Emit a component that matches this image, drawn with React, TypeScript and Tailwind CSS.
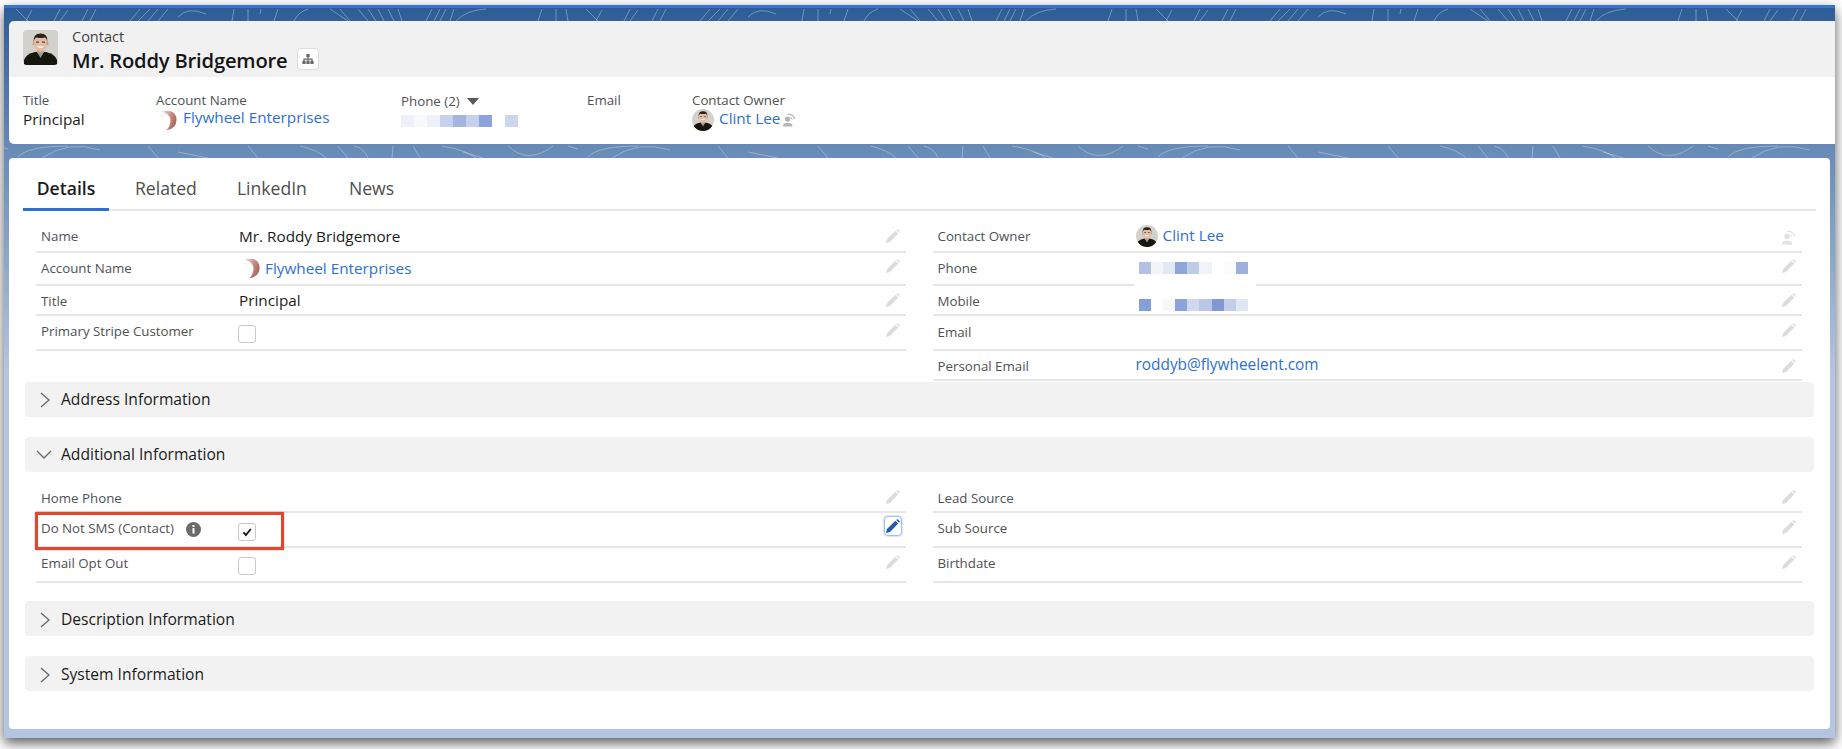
import React from "react";

const FONT = "font-['Open_Sans','Noto_Sans',sans-serif]";

const topStrokes = [
  "M8 9 L20 21", "M24 10 L18 21", "M52 9 L46 21", "M60 10 L52 21", "M80 9 L74 21", "M88 9 L82 21",
  "M132 9 L122 21", "M142 9 L130 21", "M150 9 L140 21", "M160 9 L150 21", "M170 17 Q180 6 198 14",
  "M226 9 L224 21", "M240 9 L240 21", "M253 9 L252 14", "M270 9 L266 21", "M300 9 Q290 12 286 21",
  "M322 9 L340 21", "M332 9 L342 21", "M350 9 L360 21", "M360 9 L368 21", "M370 9 L376 21", "M380 9 L386 21", "M390 9 L394 21",
  "M424 9 L418 21", "M432 9 L426 21", "M438 9 L432 21", "M446 9 L442 21", "M478 9 Q458 10 448 21",
  "M534 9 L530 21", "M548 9 L548 21", "M558 9 L560 21",
];
const bottomStrokes = [
  "M10 157 Q20 146 60 146", "M34 158 Q60 140 92 150", "M140 146 L150 158", "M170 152 L200 158", "M240 146 L250 158",
  "M292 146 Q310 150 318 158", "M330 146 L340 158", "M346 146 Q356 148 360 158", "M385 146 L384 158", "M405 146 L412 158",
  "M434 146 Q460 150 470 160", "M455 152 L475 158", "M500 146 Q520 165 545 146", "M560 146 Q590 158 610 146",
];

function Pattern() {
  return (
    <svg className="absolute left-0 top-0 w-full h-[170px] pointer-events-none" aria-hidden="true">
      <defs>
        <pattern id="swirl" x="4" y="-8" width="570" height="170" patternUnits="userSpaceOnUse">
          {topStrokes.map((d) => (
            <path key={d} d={d} fill="none" stroke="#ffffff" strokeOpacity="0.32" strokeWidth="1" />
          ))}
          {bottomStrokes.map((d) => (
            <path key={d} d={d} fill="none" stroke="#ffffff" strokeOpacity="0.3" strokeWidth="1" />
          ))}
        </pattern>
      </defs>
      <rect x="0" y="0" width="100%" height="170" fill="url(#swirl)" />
    </svg>
  );
}

function Face({ className }: { className: string }) {
  return (
    <svg viewBox="0 0 35 35" className={className} aria-hidden="true">
      <defs>
        <filter id="soft">
          <feGaussianBlur stdDeviation="0.45" />
        </filter>
      </defs>
      <rect width="35" height="35" fill="#d2d1cb" />
      <g filter="url(#soft)">
        <path d="M1 35 L1 30 Q3 24 12 22 L23 22 Q32 24 34 30 L34 35 Z" fill="#14120f" />
        <path d="M13.5 21 L17.5 28 L21.5 21 Z" fill="#9a9da0" />
        <rect x="14.2" y="18" width="6.6" height="5" fill="#c99f88" />
        <ellipse cx="17.5" cy="13" rx="6.8" ry="8.4" fill="#e3bda6" />
        <ellipse cx="10.6" cy="13.4" rx="1" ry="1.8" fill="#c99f88" />
        <ellipse cx="24.4" cy="13.4" rx="1" ry="1.8" fill="#c99f88" />
        <path d="M10.6 12 Q9.8 3.4 17.6 3.4 Q25.2 3.4 24.4 12 Q23.8 8.2 22 7.4 Q17 8.4 13 7.6 Q11.2 8.8 10.6 12 Z" fill="#2b231d" />
        <rect x="13" y="11.6" width="3" height="1" fill="#3a2c24" />
        <rect x="19" y="11.6" width="3" height="1" fill="#3a2c24" />
        <path d="M13.6 16 Q17.5 20 21.4 16 Q17.5 17.2 13.6 16 Z" fill="#ffffff" />
      </g>
    </svg>
  );
}

function Pencil({ blue = false }: { blue?: boolean }) {
  return (
    <svg viewBox="0 0 15 15" className="w-[15px] h-[15px]" aria-hidden="true">
      <path
        d="M1 14 L2 10 L10.4 1.8 L13.2 4.6 L5 13 Z M11.2 1 L12 .4 Q12.6 0 13.2 .5 L14.6 1.9 Q15 2.5 14.6 3 L14 3.8 Z"
        fill={blue ? "#1f5bb5" : "#dcdcdc"}
      />
    </svg>
  );
}

function Transfer({ className }: { className: string }) {
  return (
    <svg viewBox="0 0 15 15" className={className} aria-hidden="true">
      <circle cx="6" cy="6.5" r="2.8" fill="currentColor" />
      <path d="M1 14.5 L1 12.6 Q2.4 10.4 6 10.4 Q9.6 10.4 11 12.6 L11 14.5 Z" fill="currentColor" />
      <path d="M6 1.5 Q12 .6 13.6 6.4" fill="none" stroke="currentColor" strokeWidth="1.3" />
      <path d="M9 4.4 Q10.6 5.4 10.8 7" fill="none" stroke="currentColor" strokeWidth="1.1" />
    </svg>
  );
}

function FlywheelLogo() {
  return (
    <svg viewBox="0 0 19 22" className="w-[19px] h-[22px] shrink-0" aria-hidden="true">
      <defs>
        <linearGradient id="fly" x1="0" y1="0" x2="1" y2="0.5">
          <stop offset="0" stopColor="#f3e4e1" />
          <stop offset="0.6" stopColor="#c98f88" />
          <stop offset="1" stopColor="#a9655d" />
        </linearGradient>
      </defs>
      <path d="M3 2.4 Q18 -1 18.6 10.6 Q18.4 20 8 21.6 Q13 16.4 12.4 10.4 Q11.6 4.6 3 2.4 Z" fill="url(#fly)" />
      <path d="M1 6 Q5 5 6 8 Q3 8 1 6 Z" fill="#f6eeec" />
    </svg>
  );
}

function Check({ checked = false, className = "" }: { checked?: boolean; className?: string }) {
  return (
    <span className={"flex items-center justify-center w-[18px] h-[18px] rounded-[3px] border border-[#c9c9c9] bg-white shrink-0 -ml-[1px] " + className}>
      {checked && (
        <svg viewBox="0 0 10 10" className="w-[10px] h-[10px]" aria-hidden="true">
          <path d="M1.4 5.4 L3.9 8 L8.8 2" fill="none" stroke="#1c1c1c" strokeWidth="1.9" />
        </svg>
      )}
    </span>
  );
}

function Blur({ cells, className, cellClass = "w-[12.2px]" }: { cells: string[]; className: string; cellClass?: string }) {
  return (
    <span className={"flex h-[12px] " + className}>
      {cells.map((c, i) => (
        <span key={i} className={"h-full " + cellClass + " " + c} />
      ))}
    </span>
  );
}

const phoneCells = ["bg-[#b3c2e4]", "bg-[#f2f4fa]", "bg-[#e3e8f5]", "bg-[#8fa6da]", "bg-[#c0cce8]", "bg-[#f0f3fa]", "bg-white", "bg-[#fbfcfe]", "bg-[#9db0de]"];
const mobileCells = ["bg-[#83a0d8]", "bg-white", "bg-[#f5f7fc]", "bg-[#8ba3da]", "bg-[#cfd8ee]", "bg-[#b9c6e7]", "bg-[#8198d4]", "bg-[#c3cee9]", "bg-[#e0e6f4]"];
const topCells = ["bg-[#eef1f9]", "bg-[#f8f9fc]", "bg-[#eef1f9]", "bg-[#c6d1eb]", "bg-[#a4b5de]", "bg-[#c6d1eb]", "bg-[#8ba3da]", "bg-white", "bg-[#ccd6ee]"];

const LINK = "text-[#2e6fd1]";

function Row({
  label,
  rowClass,
  iconClass,
  children,
  icon,
  extra,
}: {
  label: React.ReactNode;
  rowClass: string;
  iconClass: string;
  children?: React.ReactNode;
  icon?: React.ReactNode;
  extra?: React.ReactNode;
}) {
  return (
    <div className={"relative flex items-start border-b-2 border-[#e6e6e6] pr-[6px] " + rowClass}>
      {extra}
      <div className="w-[203px] pl-[5px] shrink-0 text-[13.3px] leading-[20px] text-[#4f5154] flex items-center">{label}</div>
      <div className="flex-1 flex items-start text-[15.3px] leading-[20px] text-[#1b1b1b]">{children}</div>
      <div className={"shrink-0 " + iconClass}>{icon === undefined ? <Pencil /> : icon}</div>
    </div>
  );
}

function Section({ title, open = false, className = "" }: { title: string; open?: boolean; className?: string }) {
  return (
    <div className={"flex items-center h-[35px] ml-[2px] w-[1789px] rounded-[4px] bg-[#f2f2f2] " + className}>
      <span className="w-[36px] flex justify-center shrink-0">
        {open ? (
          <svg viewBox="0 0 16 9" className="w-[16px] h-[9px] ml-[2px]" aria-hidden="true">
            <path d="M1 1 L8 8 L15 1" fill="none" stroke="#6a6a6a" strokeWidth="1.4" />
          </svg>
        ) : (
          <svg viewBox="0 0 10 16" className="w-[10px] h-[16px] ml-[3px]" aria-hidden="true">
            <path d="M1 1 L9 8 L1 15" fill="none" stroke="#6a6a6a" strokeWidth="1.4" />
          </svg>
        )}
      </span>
      <span className="text-[15.6px] text-[#1b1b1b]">{title}</span>
    </div>
  );
}

function Highlight({ label, value, className }: { label: string; value: React.ReactNode; className: string }) {
  return (
    <div className={"flex flex-col " + className}>
      <span className="text-[13.3px] leading-[20px] text-[#4f5154] flex items-center">{label}</span>
      {value}
    </div>
  );
}

export default function App() {
  return (
    <div className={"w-[1842px] h-[749px] overflow-hidden bg-white pl-[4px] pt-[5px] " + FONT}>
      <div className="relative w-[1831px] h-[733px] border-t-[3px] border-[#3a73d0] bg-linear-to-b from-[#2d5d96] via-[#6a8cb8] via-[20%] to-[#b3c5e0] to-[50%] shadow-[0_5px_12px_rgba(0,0,0,0.65)] pt-[13px] pl-[5px]">
        <Pattern />

        <div className="relative rounded-l-[5px] overflow-hidden">
          <div className="flex items-start h-[56px] bg-[#f1f1f1] pl-[14px] pt-[9px]">
            <Face className="w-[35px] h-[35px] rounded-[4px] shrink-0" />
            <div className="ml-[14px] flex flex-col -mt-[3px]">
              <span className="text-[14.5px] leading-[20px] text-[#3f3f3f]">Contact</span>
              <span className="flex items-center text-[20.2px] leading-[27px] font-semibold text-[#151515] tracking-[-0.2px]">
                Mr. Roddy Bridgemore
                <span className="ml-[10px] -mt-[3px] w-[22px] h-[22px] rounded-[4px] border border-[#dcdcdc] bg-white flex items-center justify-center">
                  <svg viewBox="0 0 12 12" className="w-[12px] h-[12px]" aria-hidden="true">
                    <path d="M4.4 1 H7.6 V4.2 H6.5 V5.6 H10.6 V7.8 H11.6 V11 H8.4 V7.8 H9.4 V6.8 H6.5 V7.8 H7.6 V11 H4.4 V7.8 H5.5 V6.8 H2.6 V7.8 H3.6 V11 H.4 V7.8 H1.4 V5.6 H5.5 V4.2 H4.4 Z" fill="#666666" />
                  </svg>
                </span>
              </span>
            </div>
          </div>
          <div className="flex h-[67px] bg-white pl-[14px] pt-[13px]">
            <Highlight
              className="w-[133px]"
              label="Title"
              value={<span className="text-[15.3px] leading-[20px] mt-[-1px] text-[#1b1b1b]">Principal</span>}
            />
            <Highlight
              className="w-[245px]"
              label="Account Name"
              value={
                <span className={"flex items-center text-[15.3px] leading-[20px] -mt-[1px] ml-[2px] " + LINK}>
                  <FlywheelLogo />
                  <span className="ml-[6px] -mt-[6px]">Flywheel Enterprises</span>
                </span>
              }
            />
            <div className="w-[186px] flex flex-col pt-[1px]">
              <span className="flex items-center text-[13.3px] leading-[20px] text-[#4f5154]">
                Phone (2)
                <svg viewBox="0 0 12 7" className="ml-[7px] w-[12px] h-[7px]" aria-hidden="true">
                  <path d="M0 0 H12 L6 7 Z" fill="#5a5a5a" />
                </svg>
              </span>
              <Blur cells={topCells} cellClass="w-[13px]" className="mt-[4px]" />
            </div>
            <div className="w-[105px] flex items-start">
              <span className="text-[13.3px] leading-[20px] text-[#4f5154]">Email</span>
            </div>
            <Highlight
              className="w-[260px]"
              label="Contact Owner"
              value={
                <span className={"flex items-start text-[15.3px] leading-[20px] " + LINK}>
                  <Face className="w-[22px] h-[22px] rounded-full shrink-0 -mt-[1px]" />
                  <span className="ml-[5px] -mt-[2px]">Clint Lee</span>
                  <Transfer className="w-[14px] h-[14px] mt-[3px] ml-[2px] text-[#b5b5b5]" />
                </span>
              }
            />
          </div>
        </div>

        <div className="relative mt-[14px] w-[1821px] h-[571px] rounded-[4px] bg-white px-[14px]">
          <div className="flex items-end h-[53px] border-b-2 border-[#e6e6e6] w-[1793px]">
            <div className="w-[86px] h-[53px] -mb-[2px] border-b-[3px] border-[#2e6fd1] flex items-center justify-center pt-[11px] text-[17.6px] font-semibold text-[#1b1b1b]">Details</div>
            <div className="flex items-center h-[53px] pt-[11px] text-[17.6px] text-[#4d4d4d]">
              <span className="ml-[26px]">Related</span>
              <span className="ml-[40px]">LinkedIn</span>
              <span className="ml-[42px]">News</span>
            </div>
          </div>

          <div className="ml-[13px] flex gap-[27px] w-[1766px]">
            <div className="flex-1 flex flex-col">
              <Row label="Name" rowClass="h-[42px] pt-[15px]" iconClass="mt-[3px]">Mr. Roddy Bridgemore</Row>
              <Row label="Account Name" rowClass="h-[33px] pt-[5px]" iconClass="mt-[1px]">
                <span className={"flex items-center " + LINK}>
                  <span className="ml-[2px] -mt-[1px]"><FlywheelLogo /></span>
                  <span className="ml-[5px] -mt-[1px]">Flywheel Enterprises</span>
                </span>
              </Row>
              <Row label="Title" rowClass="h-[30px] pt-[5px]" iconClass="mt-[2px]"><span className="-mt-[1px]">Principal</span></Row>
              <Row label="Primary Stripe Customer" rowClass="h-[35px] pt-[5px]" iconClass="mt-[2px]"><Check className="mt-[4px]" /></Row>
            </div>
            <div className="flex-1 flex flex-col">
              <Row
                label="Contact Owner"
                rowClass="h-[42px] pt-[15px]"
                iconClass="mt-[4px]"
                icon={<Transfer className="w-[15px] h-[15px] text-[#e2e2e2]" />}
              >
                <span className={"flex items-start " + LINK}>
                  <Face className="w-[22px] h-[22px] rounded-full shrink-0 -mt-[1px]" />
                  <span className="ml-[5px] -mt-[1px]">Clint Lee</span>
                </span>
              </Row>
              <Row
                label="Phone"
                rowClass="h-[33px] pt-[5px]"
                iconClass="mt-[1px]"
                extra={<span className="absolute left-[201px] -bottom-[2px] w-[122px] h-[2px] bg-white" />}
              >
                <Blur cells={phoneCells} className="mt-[4px] ml-[3px]" />
              </Row>
              <Row label="Mobile" rowClass="h-[30px] pt-[5px]" iconClass="mt-[2px]">
                <Blur cells={mobileCells} className="mt-[8px] ml-[3px]" />
              </Row>
              <Row label="Email" rowClass="h-[35px] pt-[6px]" iconClass="mt-[1px]" />
              <Row label="Personal Email" rowClass="h-[30px] pt-[5px]" iconClass="mt-[3px]">
                <span className={"-mt-[1px] text-[15.4px] " + LINK}>roddyb@flywheelent.com</span>
              </Row>
            </div>
          </div>

          <Section title="Address Information" className="mt-[1px]" />
          <Section title="Additional Information" open className="mt-[20px]" />

          <div className="ml-[13px] flex gap-[27px] w-[1766px]">
            <div className="flex-1 flex flex-col">
              <Row label="Home Phone" rowClass="h-[41px] pt-[16px]" iconClass="mt-[2px]" />
              <Row
                label={
                  <>
                    Do Not SMS (Contact)
                    <svg viewBox="0 0 15 15" className="ml-[12px] w-[15px] h-[15px] mt-[3px]" aria-hidden="true">
                      <circle cx="7.5" cy="7.5" r="7.5" fill="#6a6a6a" />
                      <rect x="6.5" y="3" width="2" height="2" fill="#ffffff" />
                      <rect x="6.5" y="6" width="2" height="5.6" fill="#ffffff" />
                    </svg>
                  </>
                }
                rowClass="h-[35px] pt-[5px]"
                iconClass="-mt-[2px]"
                icon={
                  <span className="flex items-center justify-center w-[18px] h-[20px] -ml-[1px] -mr-[2px] rounded-[4px] border border-[#9fbdf0] shadow-[0_0_2px_#7aa5ee]">
                    <Pencil blue />
                  </span>
                }
                extra={<span className="absolute -left-[1px] -top-[1px] w-[249px] h-[38px] border-[3px] border-[#e2462c] shadow-[0_0_2px_rgba(0,0,0,0.3)]" />}
              >
                <Check checked className="mt-[5px]" />
              </Row>
              <Row label="Email Opt Out" rowClass="h-[35px] pt-[5px]" iconClass="mt-[2px]"><Check className="mt-[4px]" /></Row>
            </div>
            <div className="flex-1 flex flex-col">
              <Row label="Lead Source" rowClass="h-[41px] pt-[16px]" iconClass="mt-[2px]" />
              <Row label="Sub Source" rowClass="h-[35px] pt-[5px]" iconClass="mt-[2px]" />
              <Row label="Birthdate" rowClass="h-[35px] pt-[5px]" iconClass="mt-[2px]" />
            </div>
          </div>

          <Section title="Description Information" className="mt-[18px] pt-[2px]" />
          <Section title="System Information" className="mt-[20px] pt-[2px]" />
        </div>
      </div>
    </div>
  );
}
